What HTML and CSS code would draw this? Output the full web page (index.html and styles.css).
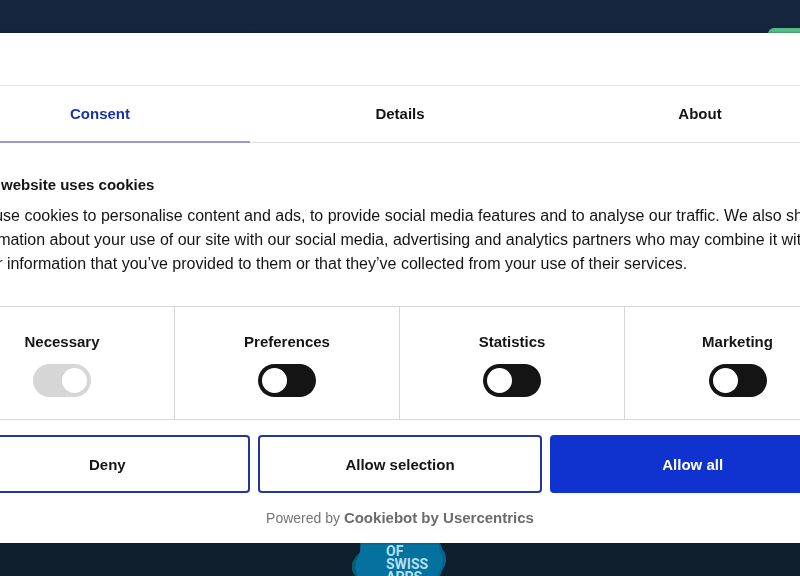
FILE: index.html
```html
<!DOCTYPE html>
<html lang="en">
<head>
  <meta charset="UTF-8">
  <meta name="viewport" content="width=device-width, initial-scale=1.0">
  <title>Cookie consent</title>
  <link rel="stylesheet" href="styles.css">
</head>
<body>
  <div class="page">
    <header class="page-header">
      <a class="page-cta" href="#" aria-label="Contact"></a>
    </header>
    <footer class="page-footer">
      <svg class="badge" viewBox="0 0 96 56" width="96" height="56">
        <path fill="#075d70" d="M8 0 L8 32 Q-1 41 -1 49 L3 56 L40 56 L40 0 Z"/>
        <path fill="#0b628c" d="M50 0 L87 10 Q87 26 93 33 Q96 42 91 49 L88 56 L50 56 Z"/>
        <path fill="#04719f" d="M9 0 L85 0 Q85 27 90 35 Q92 46 85 56 L5 56 Q1 44 6 37 Q11 30 9 0 Z"/>
        <g class="badge-text">
          <text x="34" y="36">OF</text>
          <text x="34" y="49">SWISS</text>
          <text x="34" y="62">APPS</text>
        </g>
      </svg>
    </footer>
  </div>

  <div class="overlay">
    <div class="dialog" role="dialog" aria-labelledby="dialogTitle">
      <div class="dialog-header"></div>

      <nav class="tabs">
        <a class="tab active" href="#consent">Consent</a>
        <a class="tab" href="#details">Details</a>
        <a class="tab" href="#about">About</a>
      </nav>

      <div class="content" id="consent">
        <h2 id="dialogTitle">This website uses cookies</h2>
        <p>We use cookies to personalise content and ads, to provide social media features and to analyse our traffic. We also share information about your use of our site with our social media, advertising and analytics partners who may combine it with other information that you’ve provided to them or that they’ve collected from your use of their services.</p>
      </div>

      <form id="consentForm">
        <div class="toggles">
          <div class="toggle">
            <label for="necessary">Necessary</label>
            <input type="checkbox" id="necessary" checked disabled>
          </div>
          <div class="toggle">
            <label for="preferences">Preferences</label>
            <input type="checkbox" id="preferences">
          </div>
          <div class="toggle">
            <label for="statistics">Statistics</label>
            <input type="checkbox" id="statistics">
          </div>
          <div class="toggle">
            <label for="marketing">Marketing</label>
            <input type="checkbox" id="marketing">
          </div>
        </div>

        <div class="buttons">
          <button type="button">Deny</button>
          <button type="button">Allow selection</button>
          <button type="button" class="primary">Allow all</button>
        </div>
      </form>

      <div class="powered">
        Powered by <a href="#">Cookiebot by Usercentrics</a>
      </div>
    </div>
  </div>
</body>
</html>
```
FILE: styles.css
```css
* {
  box-sizing: border-box;
}
body {
  margin: 0;
  overflow: hidden;
  font-family: "Liberation Sans", Arial, sans-serif;
  font-size: 15px;
  color: #141414;
}

/* page behind the dialog */
.page {
  height: 100vh;
  display: flex;
  flex-direction: column;
  justify-content: space-between;
  background: linear-gradient(#14253d, #0f1f2e);
}
.page-header {
  display: flex;
  justify-content: flex-end;
  padding-top: 28px;
}
.page-cta {
  width: 32px;
  height: 40px;
  background: #55b984;
  border-radius: 6px 0 0 6px;
}
.page-footer {
  display: flex;
  justify-content: center;
}
.badge {
  display: block;
}
.badge-text {
  font-family: Roboto, sans-serif;
  font-size: 14px;
  font-weight: 700;
  fill: #b5dfee;
}

/* consent dialog */
.overlay {
  position: fixed;
  inset: 0;
  display: flex;
  align-items: center;
  justify-content: center;
}
.dialog {
  flex: none;
  width: 900px;
  background: #fff;
  box-shadow: 0 0 2px rgba(0, 0, 0, 0.4);
}
.dialog-header {
  height: 53px;
  border-bottom: 1px solid #e4e4e4;
}
.tabs {
  display: flex;
  border-bottom: 1px solid #dedede;
}
.tab {
  flex: 1;
  padding: 16px 0 15px;
  line-height: 24px;
  margin-bottom: -1px;
  border-bottom: 2px solid transparent;
  text-align: center;
  font-weight: bold;
  color: #141414;
  text-decoration: none;
}
.tab.active {
  color: #1a33a6;
  border-bottom-color: #959acf;
}
.content {
  padding: 30px 16px;
}
.content h2 {
  margin: 0 0 7px;
  font-size: 15px;
  line-height: 24px;
}
.content p {
  margin: 0;
  font-size: 16px;
  line-height: 24px;
}
.toggles {
  display: grid;
  grid-template-columns: repeat(4, 1fr);
  border-top: 1px solid #d6d6d6;
  border-bottom: 1px solid #d6d6d6;
}
.toggle {
  display: flex;
  flex-direction: column;
  align-items: center;
  gap: 10px;
  padding: 23px 0 22px;
  border-right: 1px solid #d6d6d6;
}
.toggle:last-child {
  border-right: none;
}
.toggle label {
  font-weight: bold;
  line-height: 24px;
}
.toggle input {
  appearance: none;
  display: flex;
  width: 58px;
  height: 33px;
  margin: 0;
  padding: 4px;
  border-radius: 17px;
  background: #141414;
  cursor: pointer;
}
.toggle input::before {
  content: "";
  width: 25px;
  height: 25px;
  border-radius: 50%;
  background: #fff;
}
.toggle input:checked {
  justify-content: flex-end;
}
.toggle input:disabled {
  background: #d6d6d6;
  cursor: default;
}
.buttons {
  display: flex;
  gap: 8px;
  padding: 15px 15px 0;
}
.buttons button {
  flex: 1;
  height: 58px;
  border: 2px solid #1f35a0;
  border-radius: 4px;
  background: #fff;
  color: #141414;
  font-family: inherit;
  font-size: 15px;
  font-weight: bold;
  cursor: pointer;
}
.buttons .primary {
  background: #1032cf;
  border-color: #1032cf;
  color: #fff;
}
.powered {
  padding: 13px 0;
  text-align: center;
  font-size: 14px;
  line-height: 24px;
  color: #757575;
}
.powered a {
  font-size: 15px;
  font-weight: bold;
  color: #6b6b6b;
  text-decoration: none;
}
```
